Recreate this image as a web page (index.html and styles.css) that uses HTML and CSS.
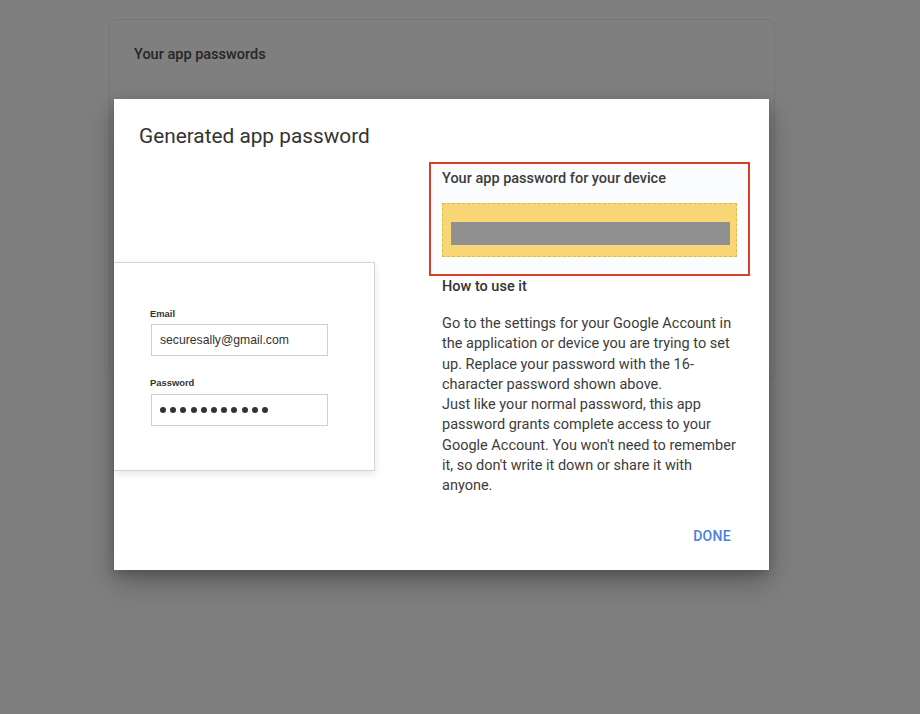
FILE: index.html
```html
<!DOCTYPE html>
<html>
<head>
<meta charset="utf-8">
<link rel="stylesheet" href="styles.css">
</head>
<body>
<div class="page">
  <section class="bg-card">
    <h2 class="bg-title">Your app passwords</h2>
  </section>
</div>

<div class="dialog" role="dialog">
  <h1 class="dialog-title">Generated app password</h1>
  <div class="dialog-body">
    <div class="illus">
      <div class="illus-card">
        <div class="field-label">Email</div>
        <div class="field-input">securesally@gmail.com</div>
        <div class="field-label second">Password</div>
        <div class="field-input dots">
          <span class="dot"></span><span class="dot"></span><span class="dot"></span><span class="dot"></span><span class="dot"></span><span class="dot"></span><span class="dot"></span><span class="dot"></span><span class="dot"></span><span class="dot"></span><span class="dot"></span>
        </div>
      </div>
    </div>
    <div class="info">
      <div class="highlight">
        <div class="pw-title">Your app password for your device</div>
        <div class="pw-box"><div class="pw-bar"></div></div>
      </div>
      <div class="howto-title">How to use it</div>
      <p class="howto-text">Go to the settings for your Google Account in the application or device you are trying to set up. Replace your password with the 16-character password shown above.<br>Just like your normal password, this app password grants complete access to your Google Account. You won't need to remember it, so don't write it down or share it with anyone.</p>
    </div>
  </div>
  <div class="dialog-footer">
    <button class="done-btn">DONE</button>
  </div>
</div>
</body>
</html>
```

FILE: styles.css
```css
* { box-sizing: border-box; }

html, body {
  margin: 0;
  padding: 0;
}

body {
  background: #7f7f7f;
  width: 920px;
  height: 714px;
  overflow: hidden;
  font-family: Roboto, "Liberation Sans", Arial, sans-serif;
  position: relative;
}

.page {
  padding: 19px 0 0 109px;
}

.bg-card {
  width: 666px;
  height: 360px;
  border: 1px solid #767676;
  border-radius: 8px;
  padding: 25px 0 0 24px;
}

.bg-title {
  margin: 0;
  font-size: 14.5px;
  font-weight: 500;
  line-height: 20px;
  color: #262626;
}

.dialog {
  position: absolute;
  left: 114px;
  top: 99px;
  width: 655px;
  height: 471px;
  background: #fff;
  box-shadow: 0 12px 28px rgba(0, 0, 0, 0.28), 0 4px 10px rgba(0, 0, 0, 0.18);
  overflow: hidden;
  display: flex;
  flex-direction: column;
}

.dialog-title {
  margin: 0;
  padding: 25px 0 0 25px;
  height: 48px;
  font-size: 20.8px;
  font-weight: 400;
  line-height: 24px;
  color: #333;
}

.dialog-body {
  display: flex;
  align-items: flex-start;
  margin-top: 15px;
  gap: 54px;
}

.illus {
  margin-top: 100px;
  width: 261px;
  flex: none;
}

.illus-card {
  width: 261px;
  height: 209px;
  border: 1px solid #d4d4d4;
  border-left: none;
  box-shadow: 0 3px 8px rgba(0, 0, 0, 0.10);
  padding: 45px 0 0 36px;
  font-family: "Liberation Sans", Arial, sans-serif;
}

.field-label {
  font-size: 9.4px;
  font-weight: 700;
  line-height: 11px;
  color: #333;
  margin-bottom: 5px;
}

.field-label.second {
  margin-top: 21px;
  margin-bottom: 6px;
}

.field-input {
  width: 177px;
  height: 32px;
  border: 1px solid #cfcfcf;
  margin-left: 1px;
  padding: 0 0 0 8px;
  font-size: 12.2px;
  line-height: 30px;
  color: #333;
}

.field-input.dots {
  display: flex;
  align-items: center;
  gap: 4.2px;
  padding-left: 8px;
}

.dot {
  width: 6px;
  height: 6px;
  border-radius: 50%;
  background: #333;
}

.info {
  width: 321px;
  flex: none;
}

.highlight {
  border: 2px solid #d9402b;
  background: #fafcfe;
  padding: 5px 11px 17px 11px;
}

.pw-title {
  font-size: 14.5px;
  font-weight: 500;
  line-height: 20px;
  color: #3c3c3c;
}

.pw-box {
  margin-top: 14px;
  width: 295px;
  height: 54px;
  background: #f8d676;
  border: 1px dashed #e2b94e;
  padding: 18px 0 0 8px;
}

.pw-bar {
  width: 279px;
  height: 23px;
  background: #909090;
}

.howto-title {
  padding: 1px 0 0 13px;
  font-size: 14.5px;
  font-weight: 500;
  line-height: 20px;
  color: #333;
}

.howto-text {
  margin: 17px 0 0 0;
  padding: 0 8px 0 13px;
  font-size: 14.5px;
  line-height: 20.25px;
  color: #3c3c3c;
}

.dialog-footer {
  display: flex;
  justify-content: flex-end;
  padding: 30px 38px 0 0;
}

.done-btn {
  border: none;
  background: none;
  padding: 0;
  font-family: Roboto, "Liberation Sans", Arial, sans-serif;
  font-size: 14px;
  font-weight: 500;
  letter-spacing: 0.3px;
  line-height: 20px;
  color: #4a80dc;
}
```
